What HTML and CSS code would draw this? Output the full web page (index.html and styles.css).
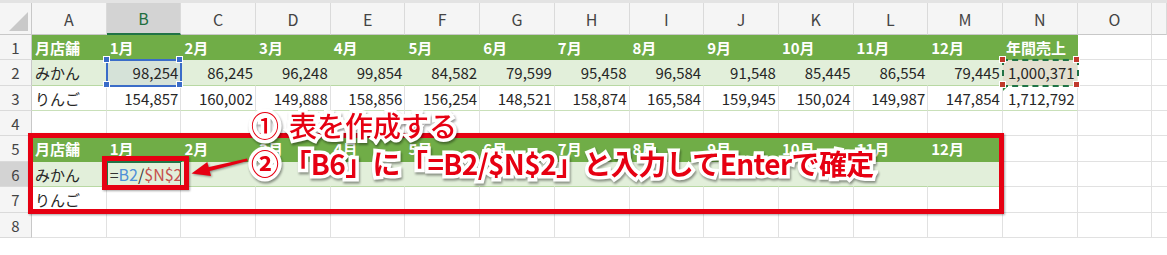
FILE: index.html
```html
<!DOCTYPE html>
<html lang="ja">
<head>
  <meta charset="UTF-8" />
  <meta name="viewport" content="width=device-width, initial-scale=1.0"/>
  <title>月別売上の割合</title>
  <link rel="stylesheet" href="styles.css">
</head>
<body>
  <div class="stage">
    <div class="ribbon-edge"></div>
    <div class="sheet" id="sheet"></div>

    <div class="frame frame-table"></div>
    <div class="frame frame-cell"></div>
    <svg class="arrow" width="1167" height="255" viewBox="0 0 1167 255">
      <polygon points="247,158.5 247.6,161 208,171.6 207,167.4" fill="#e60012"/>
      <polygon points="191.5,173.5 207.3,162 211,176" fill="#e60012"/>
    </svg>

    <div class="note">
      <div class="note-line step1"><span class="mark">①</span>表を作成する</div>
      <div class="note-line step2"><span class="mark">②</span>「B6」に「=B2/$N$2」と入力してEnterで確定</div>
    </div>
  </div>

  <script>
    const cols = "ABCDEFGHIJKLMNO".split("");
    const months = ["1月","2月","3月","4月","5月","6月","7月","8月","9月","10月","11月","12月"];
    const rows = [
      { type: "head", span: 14, cells: ["月店舗", ...months, "年間売上"] },
      { type: "band", span: 14, cells: ["みかん","98,254","86,245","96,248","99,854","84,582","79,599","95,458","96,584","91,548","85,445","86,554","79,445","1,000,371"] },
      { type: "plain", span: 14, cells: ["りんご","154,857","160,002","149,888","158,856","156,254","148,521","158,874","165,584","159,945","150,024","149,987","147,854","1,712,792"] },
      { type: "", span: 0, cells: [] },
      { type: "head", span: 13, cells: ["月店舗", ...months] },
      { type: "band", span: 13, cells: ["みかん", '<span class="f-op">=</span><span class="f-ref1">B2</span><span class="f-op">/</span><span class="f-ref2">$N$2</span>'] },
      { type: "plain", span: 13, cells: ["りんご"] },
      { type: "", span: 0, cells: [] }
    ];
    const handles = '<i class="h tl"></i><i class="h tr"></i><i class="h bl"></i><i class="h br"></i>';

    let html = '<div class="corner"></div>';
    cols.forEach(c => {
      html += `<div class="colhead${c === "B" ? " active" : ""}">${c}</div>`;
    });
    html += '<div class="colhead filler"></div>';

    rows.forEach((row, r) => {
      const num = r + 1;
      html += `<div class="rowhead${num === 6 ? " active" : ""}">${num}</div>`;
      cols.forEach((c, i) => {
        const text = row.cells[i] || "";
        let cls = "cell";
        if (i < row.span) cls += " t-" + row.type;
        if (/^[\d,]+$/.test(text)) cls += " num";
        let extra = "";
        if (c === "B" && num === 2) { cls += " sel"; extra = handles; }
        if (c === "N" && num === 2) { cls += " copy"; extra = handles; }
        if (c === "N" && num === 3) cls += " warn";
        if (c === "B" && num === 6) cls += " editing";
        html += `<div class="${cls}">${text}${extra}</div>`;
      });
      html += '<div class="cell filler"></div>';
    });

    document.getElementById("sheet").innerHTML = html;
  </script>
</body>
</html>
```

FILE: styles.css
```css
body {
  margin: 0;
  background: #fff;
  font-family: "Noto Sans CJK JP", "Noto Sans", sans-serif;
  color: #262626;
}
.stage {
  position: relative;
  width: 1167px;
  height: 255px;
  overflow: hidden;
}
.ribbon-edge {
  height: 3px;
  background: #e3e3e3;
}
.sheet {
  display: grid;
  grid-template-columns: 32px repeat(15, 74.7px) 1fr;
  grid-template-rows: 32px 25px 26px 25px 25px 26px 25px 26px 25px;
  font-size: 15px;
}
.sheet > div {
  box-sizing: border-box;
  position: relative;
  display: flex;
  align-items: center;
  padding: 0 3px;
  white-space: nowrap;
  border-right: 1px solid #e1e1e1;
  border-bottom: 1px solid #e1e1e1;
}
.corner {
  background: #f5f5f5;
  border-right-color: #c8c8c8 !important;
  border-bottom-color: #c8c8c8 !important;
}
.corner::after {
  content: "";
  position: absolute;
  right: 3px;
  bottom: 3px;
  width: 19px;
  height: 19px;
  background: #c9c9c9;
  clip-path: polygon(100% 0, 100% 100%, 0 100%);
}
.colhead {
  justify-content: center;
  background: #f5f5f5;
  color: #444;
  font-size: 16px;
  border-right-color: #dadada !important;
  border-bottom-color: #c8c8c8 !important;
}
.colhead.active {
  background: #d3d3d3;
  color: #1e6e3f;
  border-bottom: 2px solid #217346 !important;
}
.rowhead {
  justify-content: center;
  background: #f5f5f5;
  color: #444;
  border-right-color: #c8c8c8 !important;
  border-bottom-color: #dadada !important;
}
.rowhead.active {
  background: #d3d3d3;
}
.cell.num {
  justify-content: flex-end;
  padding-right: 2px;
}
.t-head {
  background: #70ad47;
  color: #fff;
  font-weight: 700;
  border-right-color: #70ad47 !important;
  border-bottom-color: #70ad47 !important;
}
.t-band {
  background: #e2efda;
  border-right-color: #e2efda !important;
  border-bottom-color: #b8d8a3 !important;
}
.t-plain {
  border-bottom-color: #c9e0b9 !important;
}
.cell.filler {
  border-right: none;
}

/* selected cell B2 */
.sel {
  background: #d5e2d8 !important;
  outline: 2px solid #3a6cc8;
  outline-offset: -1px;
  z-index: 2;
}
.sel .h {
  background: #3a6cc8;
}
/* copied cell N2 */
.copy {
  background: #e3e0d0 !important;
  outline: 2px dashed #217346;
  outline-offset: -1px;
  z-index: 2;
}
.copy .h {
  background: #c0392b;
}
.h {
  position: absolute;
  width: 5px;
  height: 5px;
  border: 1px solid #fff;
}
.h.tl { left: -4px; top: -4px; }
.h.tr { right: -3px; top: -4px; }
.h.bl { left: -4px; bottom: -3px; }
.h.br { right: -3px; bottom: -3px; }
.warn::before {
  content: "";
  position: absolute;
  left: 0;
  top: 0;
  border-top: 5px solid #2e8b3e;
  border-right: 5px solid transparent;
}

/* B6 in edit mode */
.editing {
  outline: 2px solid #217346;
  outline-offset: -1px;
  padding-left: 4px;
  font-size: 16px;
}
.f-op { color: #333; }
.f-ref1 { color: #4e8fd8; }
.f-ref2 { color: #c6524f; }

/* annotation overlay */
.frame {
  position: absolute;
  box-sizing: border-box;
  border: 5px solid #e60012;
  box-shadow: 1px 1px 2px rgba(0, 0, 0, 0.35);
}
.frame-table {
  left: 28px;
  top: 133px;
  width: 976px;
  height: 81px;
}
.frame-cell {
  left: 102px;
  top: 156px;
  width: 87px;
  height: 34px;
}
.arrow {
  position: absolute;
  left: 0;
  top: 0;
  filter: drop-shadow(1px 1px 1px rgba(0, 0, 0, 0.4));
}
.note {
  position: absolute;
  left: 251px;
  top: 106px;
  font-size: 28px;
  line-height: 38px;
  color: #e60012;
  white-space: nowrap;
}
.note-line {
  -webkit-text-stroke: 7px #fff;
  paint-order: stroke fill;
  filter: drop-shadow(1px 2px 1px rgba(0, 0, 0, 0.4));
}
.mark {
  margin-right: 10px;
}
.step1 { font-weight: 500; }
.step2 {
  font-weight: 700;
  letter-spacing: -0.6px;
}
.step2 .mark {
  margin-right: 5px;
}
```
